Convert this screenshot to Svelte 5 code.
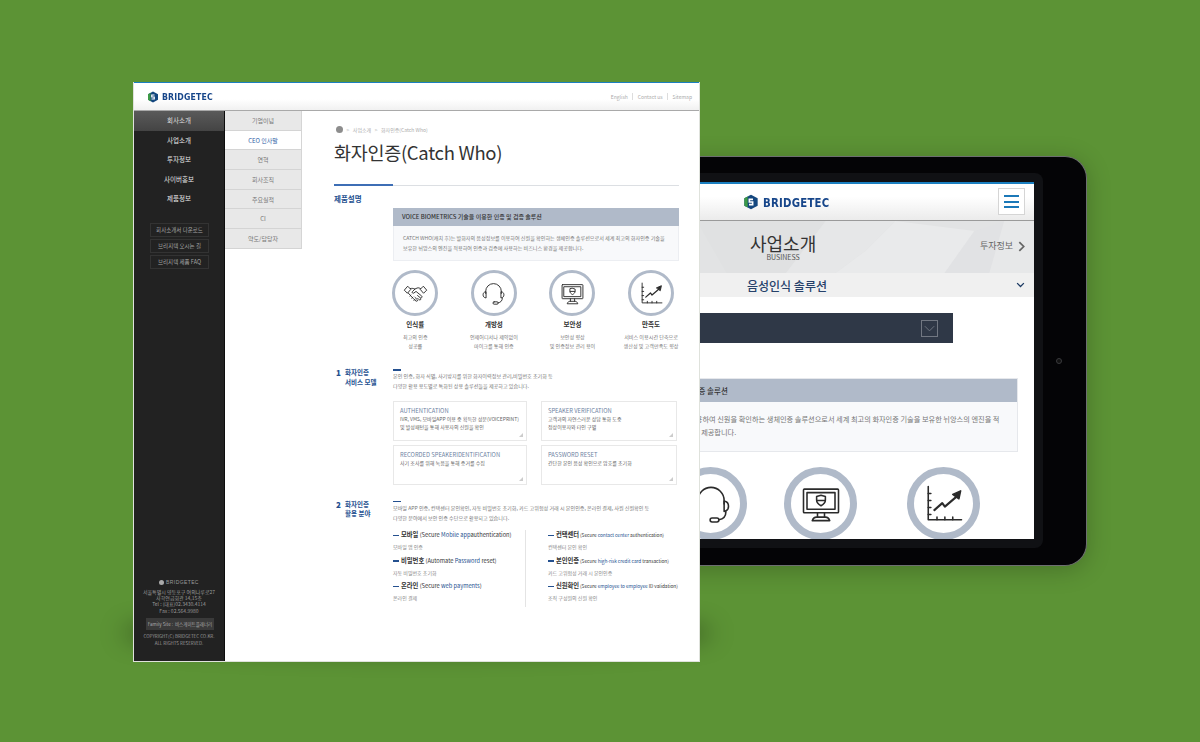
<script>
  const mainMenu = ['회사소개', '사업소개', '투자정보', '사이버홍보', '제품정보'];
  const subMenu = ['기업이념', 'CEO 인사말', '연혁', '회사조직', '주요실적', 'CI', '약도/담당자'];
  const quickLinks = ['회사소개서 다운로드', '브리지텍 오시는 길', '브리지텍 제품 FAQ'];
  const features = [
    { icon: 'hands', title: '인식률', lines: ['최고의 인증', '성공률'] },
    { icon: 'headset', title: '개방성', lines: ['언제어디서나 제약없이', '마이크를 통해 인증'] },
    { icon: 'monitor', title: '보안성', lines: ['보안성 향상', '및 인증정보 관리 용이'] },
    { icon: 'chart', title: '만족도', lines: ['서비스 이용시간 단축으로', '생산성 및 고객만족도 향상'] }
  ];
  const cards = [
    { title: 'AUTHENTICATION', lines: ['IVR, VMS, 모바일APP 이용 중 획득한 성문(VOICEPRINT)', '및 발성패턴을 통해 사용자의 신원을 확인'] },
    { title: 'SPEAKER VERIFICATION', lines: ['고객과의 자연스러운 상담 통화 도중', '정상이용자와 타인 구별'] },
    { title: 'RECORDED SPEAKERIDENTIFICATION', lines: ['사기 조사를 위해 녹음을 통해 증거를 수집'] },
    { title: 'PASSWORD RESET', lines: ['간단한 본인 음성 확인으로 암호를 초기화'] }
  ];
  const usesLeft = [
    { name: '모바일', pre: '(Secure ', hi: 'Mobile app', post: 'authentication)', sub: '모바일 앱 인증' },
    { name: '비밀번호', pre: '(Automate ', hi: 'Password', post: ' reset)', sub: '자동 비밀번호 초기화' },
    { name: '온라인', pre: '(Secure ', hi: 'web payments', post: ')', sub: '온라인 결제' }
  ];
  const usesRight = [
    { name: '컨택센터', pre: '(Secure ', hi: 'contact center', post: ' authentication)', sub: '컨택센터 본인 확인' },
    { name: '본인인증', pre: '(Secure ', hi: 'high-risk credit card', post: ' transaction)', sub: '카드 고위험성 거래 시 본인인증' },
    { name: '신원확인', pre: '(Secure ', hi: 'employee to employee', post: ' ID validation)', sub: '조직 구성원의 신원 확인' }
  ];
</script>

{#snippet logo()}
  <svg class="hex" viewBox="0 0 24 24">
    <path d="M12 1 22 6.500v11L12 23 2 17.500v-11z" fill="#14477f" />
    <path d="M12 1 2 6.500v11l5 2.800V4z" fill="#3d9a46" />
    <path d="M15 8H9.500v4H14.500v4H9" fill="none" stroke="#fff" stroke-width="2.400" />
  </svg>
{/snippet}

{#snippet icon(name)}
  <svg class="glyph" viewBox="0 0 48 48" fill="none" stroke="#2b2b2b" stroke-width="1.800" stroke-linejoin="round" stroke-linecap="round">
    {#if name === 'hands'}
      <path d="M3 17 9 10l6 6-6 7z" />
      <path d="M45 17 39 10l-6 6 6 7z" />
      <path d="M14 14.500c4-1 6 0 9 1l4-2c3-1 5 0 7 1.500" />
      <path d="M23 15.500l-5 5c-1.500 2 1 4 3 2.500l4-3 11 9c2 2-1 4.500-3 3l-5-4" />
      <path d="M10 23l10 11c2 2 3 3 5 4.500 2 1 3.500-.5 3-2l-5-5" />
      <path d="M15 27l-1.500 2M19 31l-2 2M23 35l-2 2M28 33l3 3c2 1.500 4-.5 3-2" />
    {:else if name === 'headset'}
      <path d="M9 24v-4a15 15 0 0 1 30 0v4" />
      <path d="M9 20.500c-3.500.5-5 3-5 6s1.500 5.500 5 6z" />
      <path d="M39 20.500c3.500.5 5 3 5 6s-1.500 5.500-5 6z" />
      <path d="M41 33c0 5-3 8-8 9" />
      <rect x="23" y="40" width="10" height="4.500" rx="2.200" />
    {:else if name === 'monitor'}
      <rect x="4" y="7" width="40" height="27" rx="1" />
      <rect x="8" y="11" width="32" height="19" />
      <path d="M24 14l5 1.500v4c0 3-2 5-5 6.500-3-1.500-5-3.500-5-6.500v-4z" />
      <path d="M19.500 20h9" />
      <path d="M20 34v5M28 34v5M14 43c1-3 3-4 5-4h10c2 0 4 1 5 4z" />
    {:else}
      <path d="M6 4v38h38" />
      <path d="M6 12h3M6 20h3M6 28h3M6 36h3M16 42v-3M25 42v-3M34 42v-3" />
      <path d="M13 31l9-8 3 4 14-12" stroke-width="2.400" />
      <path d="M34 13l9-4-2 9z" fill="#2b2b2b" />
    {/if}
  </svg>
{/snippet}

{#snippet useList(items)}
  <ul class="uses">
    {#each items as item}
      <li>
        <p class="use-head"><i></i><b>{item.name}</b> {item.pre}<em>{item.hi}</em>{item.post}</p>
        <p class="use-sub">{item.sub}</p>
      </li>
    {/each}
  </ul>
{/snippet}

<main class="stage">
  <section class="tablet">
    <div class="bezel">
      <div class="screen">
        <header class="t-head">
          <div class="t-logo">{@render logo()}<span>BRIDGETEC</span></div>
          <button class="burger" aria-label="menu"><i></i><i></i><i></i></button>
        </header>
        <div class="t-banner">
          <svg class="mesh" viewBox="0 0 500 52" preserveAspectRatio="none">
            <polygon points="160,0 290,0 250,52 190,52" fill="#e0e1e2" />
            <polygon points="290,0 360,0 330,30 300,52 250,52" fill="#e6e7e8" />
            <polygon points="360,0 440,10 410,52 300,52 330,30" fill="#e9eaeb" />
            <polygon points="440,10 470,0 455,52 410,52" fill="#e1e2e4" />
            <polygon points="470,0 500,0 500,52 455,52" fill="#e7e8e9" />
          </svg>
          <div class="t-title"><h2>사업소개</h2><span>BUSINESS</span></div>
          <div class="t-next">투자정보 <svg viewBox="0 0 8 12"><path d="M1.500 1 6.500 6l-5 5" /></svg></div>
        </div>
        <div class="t-accordion">
          <span>음성인식 솔루션</span>
          <svg viewBox="0 0 12 8"><path d="M1.500 1.500 6 6l4.500-4.500" /></svg>
        </div>
        <div class="t-select"><span class="t-caret"><svg viewBox="0 0 16 16"><path d="M3 5.500 8 10.500l5-5" /></svg></span></div>
        <div class="t-box">
          <h3>VOICE BIOMETRICS 기술을 이용한 인증 및 검증 솔루션</h3>
          <p>CATCH WHO(캐치 후)는 발화자의 음성정보를 이용하여 신원을 확인하는 생체인증 솔루션으로서 세계 최고의 화자인증 기술을 보유한 뉘앙스의 엔진을 적<br />
          용하여 인증과 검증 등에 사용하는 비즈니스 환경을 제공합니다.</p>
        </div>
        <div class="t-icons">
          {#each features as f}
            <div class="ring big">{@render icon(f.icon)}</div>
          {/each}
        </div>
      </div>
    </div>
    <span class="camera"></span>
  </section>

  <div class="window-shadow"></div>
  <section class="window">
    <header class="w-head">
      <div class="w-logo">{@render logo()}<span>BRIDGETEC</span></div>
      <nav class="util"><span>English</span><span>Contact us</span><span>Sitemap</span></nav>
    </header>
    <div class="w-body">
      <aside class="side">
        <ul class="main-menu">
          {#each mainMenu as item, i}
            <li class:on={i === 0}>{item}</li>
          {/each}
        </ul>
        <div class="quick">
          {#each quickLinks as link}
            <span>{link}</span>
          {/each}
        </div>
        <footer class="side-foot">
          <div class="foot-logo"><i></i>BRIDGETEC</div>
          <p class="addr">서울특별시 영등포구 여의나루로27<br />사학연금회관 14,15층<br />Tel : (대표)02.3430.4114<br />Fax : 02.564.9980</p>
          <div class="family">Family Site : &nbsp;비스게이트플래너리</div>
          <p class="copy">COPYRIGHT(C) BRIDGETEC CO.KR.<br />ALL RIGHTS RESERVED.</p>
        </footer>
      </aside>
      <ul class="sub-menu">
        {#each subMenu as item, i}
          <li class:on={i === 1}>{item}</li>
        {/each}
      </ul>
      <article class="content">
        <div class="crumb"><i></i><span>&gt;</span><span>사업소개</span><span>&gt;</span><span>화자인증(Catch Who)</span></div>
        <h1>화자인증(Catch Who)</h1>
        <div class="rule"></div>
        <h4 class="tag">제품설명</h4>
        <div class="indent">
          <div class="box">
            <h3>VOICE BIOMETRICS 기술을 이용한 인증 및 검증 솔루션</h3>
            <p>CATCH WHO(캐치 후)는 발화자의 음성정보를 이용하여 신원을 확인하는 생체인증 솔루션으로서 세계 최고의 화자인증 기술을<br />
            보유한 뉘앙스의 엔진을 적용하여 인증과 검증에 사용하는 비즈니스 환경을 제공합니다.</p>
          </div>
          <div class="features">
            {#each features as f}
              <div class="feature">
                <div class="ring">{@render icon(f.icon)}</div>
                <strong>{f.title}</strong>
                <p>{f.lines[0]}<br />{f.lines[1]}</p>
              </div>
            {/each}
          </div>
        </div>

        <div class="section first">
          <div class="sec-label"><b>1</b><span>화자인증<br />서비스 모델</span></div>
          <div class="sec-main">
            <i class="dash"></i>
            <p class="lead">본인 인증, 화자 식별, 사기방지를 위한 화자이력정보 관리,비밀번호 초기화 등<br />다양한 활용 용도별로 특화된 상용 솔루션들을 제공하고 있습니다.</p>
            <div class="cards">
              {#each cards as c}
                <div class="card">
                  <h5>{c.title}</h5>
                  <p>{c.lines[0]}{#if c.lines[1]}<br />{c.lines[1]}{/if}</p>
                </div>
              {/each}
            </div>
          </div>
        </div>

        <div class="section second">
          <div class="sec-label"><b>2</b><span>화자인증<br />활용 분야</span></div>
          <div class="sec-main">
            <i class="dash"></i>
            <p class="lead">모바일 APP 인증, 컨택센터 본인확인, 자동 비밀번호 초기화, 카드 고위험성 거래 시 본인인증, 온라인 결제, 사원 신원확인 등<br />다양한 분야에서 보안 인증 수단으로 활용되고 있습니다.</p>
            <div class="use-cols">
              {@render useList(usesLeft)}
              {@render useList(usesRight)}
            </div>
          </div>
        </div>
      </article>
    </div>
  </section>
</main>

<style>
  :global(body) {
    margin: 0;
    background: #5c9335;
  }

  .stage {
    position: relative;
    width: 1200px;
    height: 742px;
    overflow: hidden;
    background: #5c9335;
    font-family: "Noto Sans CJK KR", "Noto Sans", sans-serif;
  }

  p, h1, h2, h3, h4, h5, ul { margin: 0; padding: 0; }
  ul { list-style: none; }

  .window-shadow {
    position: absolute;
    left: 122px;
    top: 616px;
    width: 590px;
    height: 34px;
    border-radius: 50%;
    background: rgba(0, 0, 0, 0.5);
    filter: blur(12px);
  }

  /* tablet */
  .tablet {
    position: absolute;
    left: 520px;
    top: 156px;
    width: 567px;
    height: 410px;
    box-sizing: border-box;
    padding: 16px 43px 17px 8px;
    background: #040406;
    border-radius: 22px;
    border: 1.500px solid #6d6f70;
    border-left-color: #333;
    box-shadow: 0 4px 24px rgba(0, 0, 0, 0.22);
  }
  .camera {
    position: absolute;
    right: 24px;
    top: 201px;
    width: 4px;
    height: 4px;
    border-radius: 50%;
    border: 1px solid #3a3b3d;
    background: #111;
  }
  .bezel {
    height: 100%;
    box-sizing: border-box;
    padding: 9px 9px 9px;
    background: #101114;
    border-radius: 8px;
  }
  .screen {
    height: 100%;
    overflow: hidden;
    background: #fff;
  }
  .t-head {
    position: relative;
    height: 39px;
    box-sizing: border-box;
    display: flex;
    align-items: center;
    justify-content: center;
    border-top: 2px solid #1b7fc0;
    border-bottom: 1.500px solid #9a9a9a;
    background: linear-gradient(#fff 35%, #ebebeb);
  }
  .t-logo {
    display: flex;
    align-items: center;
    gap: 4px;
    color: #17468a;
    font: 700 13px "DejaVu Sans", sans-serif;
    letter-spacing: 0.300px;
  }
  .t-logo span {
    margin-right: -19px;
    transform: scaleX(0.78);
    transform-origin: left center;
  }
  .t-logo .hex { width: 16px; height: 16px; }
  .burger {
    position: absolute;
    right: 9px;
    top: 4px;
    width: 27px;
    height: 27px;
    padding: 0;
    display: flex;
    flex-direction: column;
    justify-content: center;
    align-items: center;
    gap: 3.500px;
    background: #fff;
    border: 1px solid #d5d5d5;
  }
  .burger i {
    width: 15px;
    height: 2px;
    background: #1b78b8;
  }
  .t-banner {
    position: relative;
    height: 52px;
    background: #e2e3e4;
  }
  .mesh {
    position: absolute;
    inset: 0;
    width: 100%;
    height: 100%;
  }
  .t-title {
    position: absolute;
    left: 212px;
    top: 12px;
    text-align: center;
    color: #333;
  }
  .t-title h2 {
    font-size: 18px;
    font-weight: 400;
    line-height: 20px;
  }
  .t-title span {
    display: block;
    font-size: 7px;
    line-height: 8px;
    color: #555;
  }
  .t-next {
    position: absolute;
    right: 9px;
    top: 17px;
    display: flex;
    align-items: center;
    gap: 5px;
    font-size: 9px;
    line-height: 16px;
    color: #666;
  }
  .t-next svg { width: 7px; height: 11px; fill: none; stroke: #666; stroke-width: 2; }
  .t-accordion {
    position: relative;
    height: 24px;
    display: flex;
    align-items: center;
    justify-content: center;
    background: #f0f0f0;
    color: #26416a;
    font-size: 12px;
    font-weight: 500;
    padding-left: 2px;
  }
  .t-accordion svg {
    position: absolute;
    right: 9px;
    top: 9px;
    width: 9px;
    height: 6px;
    fill: none;
    stroke: #1c3a63;
    stroke-width: 1.700;
  }
  .t-select {
    display: flex;
    justify-content: flex-end;
    align-items: center;
    height: 30px;
    margin: 16px 81px 0 82px;
    padding-right: 15px;
    background: #2f3847;
  }
  .t-caret {
    display: flex;
    width: 15px;
    height: 15px;
    border: 1px solid #717782;
  }
  .t-caret svg { fill: none; stroke: #717782; stroke-width: 1; }
  .t-box {
    margin: 35px 16px 0 0;
    border: 1px solid #e6e8ec;
    background: #f8f9fb;
  }
  .t-box h3 {
    height: 23px;
    padding-left: 14px;
    background: #b0bac9;
    color: #333;
    font-size: 7.500px;
    font-weight: 500;
    line-height: 23px;
  }
  .t-box p {
    padding: 11px 12px 0;
    height: 38px;
    color: #777;
    font-size: 7.200px;
    line-height: 12.500px;
    white-space: nowrap;
  }
  .t-icons {
    display: flex;
    margin: 15px 0 0 26px;
    gap: 37px;
  }
  .t-icons .ring:last-child { margin-left: 13px; }
  .ring {
    flex: none;
    display: flex;
    align-items: center;
    justify-content: center;
    box-sizing: border-box;
    width: 46px;
    height: 46px;
    border: 3px solid #b0bac9;
    border-radius: 50%;
    background: #fff;
  }
  .glyph { width: 25px; height: 25px; }
  .ring.big {
    width: 73px;
    height: 73px;
    border-width: 7px;
  }
  .ring.big .glyph { width: 42px; height: 42px; }

  /* main window */
  .window {
    position: absolute;
    left: 133px;
    top: 82px;
    width: 567px;
    height: 580px;
    box-sizing: border-box;
    display: flex;
    flex-direction: column;
    background: #fff;
    border: 1px solid #dfe2dc;
    border-top: none;
  }
  .w-head {
    height: 29px;
    flex: none;
    display: flex;
    align-items: center;
    justify-content: space-between;
    box-sizing: border-box;
    padding: 0 7px 0 13px;
    border-top: 1px solid #1b7fc0;
    border-bottom: 1.500px solid #a9a9a9;
    background: linear-gradient(#fff 60%, #f1f1f1);
  }
  .w-logo {
    display: flex;
    align-items: center;
    gap: 3px;
    color: #17468a;
    font: 700 9.500px "DejaVu Sans", sans-serif;
    letter-spacing: 0.200px;
  }
  .w-logo span {
    transform: scaleX(0.82);
    transform-origin: left center;
  }
  .w-logo .hex { width: 12px; height: 12px; }
  .util {
    display: flex;
    gap: 4.500px;
    color: #aaa;
    font-size: 5px;
  }
  .util span + span {
    padding-left: 4.500px;
    border-left: 1px solid #ddd;
  }
  .w-body {
    flex: 1;
    min-height: 0;
    display: flex;
  }

  .side {
    width: 91px;
    box-sizing: border-box;
    flex: none;
    display: flex;
    flex-direction: column;
    background: #222;
    border-right: 1px solid #0d0d0d;
    color: #e6e6e6;
  }
  .main-menu li {
    height: 19.600px;
    text-align: center;
    font-size: 6.500px;
    font-weight: 400;
    line-height: 19.600px;
  }
  .main-menu li.on {
    background: linear-gradient(#5a5a5a, #444);
    color: #ddd;
  }
  .quick {
    display: flex;
    flex-direction: column;
    gap: 2px;
    margin: 14px 15px 0 16px;
  }
  .quick span {
    height: 12px;
    border: 1px solid #333;
    text-align: center;
    color: #a5a5a5;
    font-size: 5.500px;
    line-height: 12px;
    white-space: nowrap;
  }
  .side-foot {
    margin-top: auto;
    padding-bottom: 15px;
    text-align: center;
    color: #9b9b9b;
    font-size: 5px;
    line-height: 6.300px;
  }
  .foot-logo {
    display: flex;
    align-items: center;
    justify-content: center;
    gap: 2px;
    margin-bottom: 3px;
    letter-spacing: 0.400px;
    font-family: "Liberation Sans", sans-serif;
  }
  .foot-logo i {
    width: 5px;
    height: 5px;
    border-radius: 50%;
    background: #aaa;
  }
  .family {
    margin: 4px 10px 3.500px 12px;
    height: 12px;
    background: #3a3a3a;
    color: #aaa;
    font-size: 4.500px;
    line-height: 12px;
    white-space: nowrap;
  }
  .copy { font-size: 4.500px; }

  .sub-menu {
    width: 77px;
    box-sizing: border-box;
    flex: none;
    align-self: flex-start;
    border-right: 1px solid #d5d5d5;
    background: #e8e8e8;
  }
  .sub-menu li {
    height: 19.700px;
    box-sizing: border-box;
    border-bottom: 1px solid #d4d4d4;
    text-align: center;
    color: #777;
    font-size: 6px;
    line-height: 19px;
  }
  .sub-menu li.on {
    background: #fff;
    color: #2f5ea5;
  }

  .content {
    flex: 1;
    min-width: 0;
    padding: 13px 20px 0 32px;
  }
  .crumb {
    display: flex;
    align-items: center;
    gap: 3.500px;
    height: 10px;
    color: #aaa;
    font-size: 5px;
  }
  .crumb i {
    width: 7px;
    height: 7px;
    margin-left: 2px;
    border-radius: 50%;
    background: #8d8d8d;
  }
  h1 {
    margin-top: 3px;
    color: #333;
    font-size: 18.500px;
    font-weight: 400;
    line-height: 30px;
    letter-spacing: -0.300px;
  }
  .rule {
    position: relative;
    height: 1px;
    margin-top: 17.500px;
    background: #dcdfe3;
  }
  .rule::before {
    content: "";
    position: absolute;
    left: 0;
    top: -0.500px;
    width: 59px;
    height: 1.500px;
    background: #3d6eb5;
  }
  .tag {
    margin-top: 7.500px;
    color: #24508f;
    font-size: 7.500px;
    font-weight: 700;
    line-height: 11px;
  }
  .indent { margin: 4px 0 0 59px; }
  .box {
    border: 1px solid #eceef2;
    border-top: none;
    background: #f8f9fb;
  }
  .box h3 {
    height: 18px;
    padding-left: 9px;
    background: #b0bac9;
    color: #333;
    font-size: 6px;
    font-weight: 500;
    line-height: 18px;
    margin: 0 -1px;
  }
  .box p {
    height: 34px;
    box-sizing: border-box;
    padding: 7px 9px 0;
    color: #777;
    font-size: 5.100px;
    line-height: 10px;
    white-space: nowrap;
  }
  .features {
    display: flex;
    margin: 9px 0 0 -17px;
  }
  .feature {
    width: 78.600px;
    flex: none;
    display: flex;
    flex-direction: column;
    align-items: center;
    color: #777;
    font-size: 5.100px;
    line-height: 9px;
    text-align: center;
    white-space: nowrap;
  }
  .feature strong {
    margin-top: 3px;
    margin-bottom: 3px;
    color: #333;
    font-size: 6.500px;
    line-height: 10px;
  }

  .section { display: flex; }
  .first { margin-top: 19px; }
  .second { margin-top: 16px; }
  .sec-label {
    width: 59px;
    flex: none;
    display: flex;
    gap: 5px;
    margin-top: -1px;
    color: #24508f;
    font-size: 6.500px;
    font-weight: 700;
    line-height: 9.800px;
    white-space: nowrap;
  }
  .sec-label b {
    width: 4px;
    margin-left: 2px;
    font-size: 8px;
  }
  .dash {
    display: block;
    width: 8px;
    height: 1.500px;
    background: #24508f;
  }
  .lead {
    color: #777;
    font-size: 5.100px;
    line-height: 10px;
    white-space: nowrap;
  }
  .second .lead { margin-top: 1px; }
  .cards {
    display: grid;
    grid-template-columns: 134px 136px;
    grid-auto-rows: 40px;
    gap: 4px 14px;
    margin-top: 10px;
  }
  .card {
    position: relative;
    padding: 4px 6px 0;
    border: 1px solid #e8e8e8;
    color: #666;
    font-size: 5px;
    line-height: 8.500px;
    white-space: nowrap;
  }
  .card::after {
    content: "";
    position: absolute;
    right: 3px;
    bottom: 3px;
    border: 2px solid transparent;
    border-right-color: #ccc;
    border-bottom-color: #ccc;
  }
  .card h5 {
    color: #6d7f9f;
    font-size: 5.800px;
    font-weight: 400;
    line-height: 9px;
  }
  .use-cols {
    display: flex;
    margin-top: 7px;
  }
  .uses { width: 132px; flex: none; }
  .uses + .uses {
    width: 131px;
    border-left: 1px solid #e4e4e4;
    padding-left: 22px;
  }
  .use-head {
    height: 9px;
    color: #333;
    font-size: 5.700px;
    line-height: 9px;
    white-space: pre;
  }
  .uses + .uses .use-head {
    font-size: 4.800px;
    letter-spacing: -0.050px;
  }
  .use-head i {
    display: inline-block;
    width: 6px;
    height: 1.500px;
    margin-right: 2px;
    vertical-align: middle;
    background: #24508f;
  }
  .use-head b { font-size: 6.300px; font-weight: 700; }
  .use-head em { color: #24508f; font-style: normal; }
  .use-sub {
    margin-top: 4px;
    margin-bottom: 5.500px;
    color: #888;
    font-size: 5px;
    line-height: 7px;
  }
</style>
